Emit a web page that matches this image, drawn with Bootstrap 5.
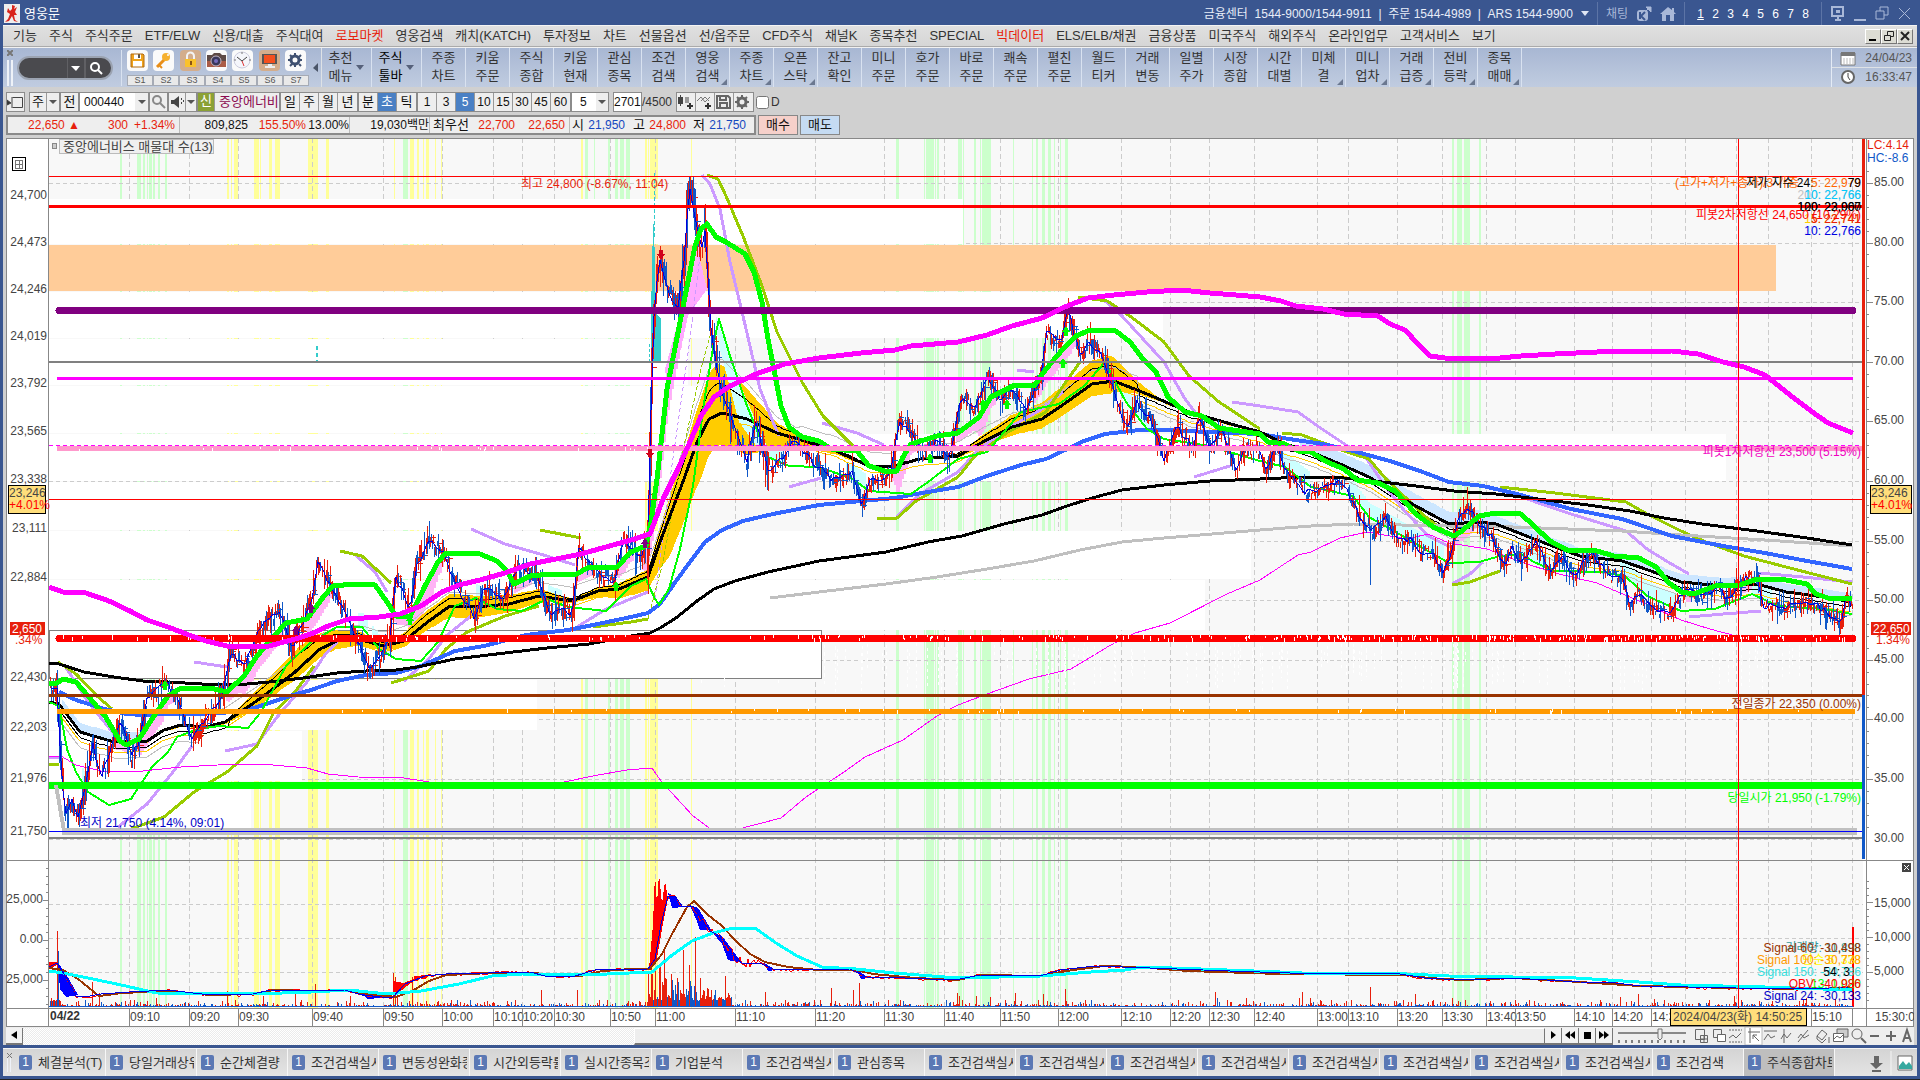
<!DOCTYPE html>
<html lang="ko">
<head>
<meta charset="utf-8">
<meta name="viewport" content="width=device-width, initial-scale=1">
<title>영웅문</title>
<link href="https://cdn.jsdelivr.net/npm/bootstrap@5.3.0/dist/css/bootstrap.min.css" rel="stylesheet">
<style>
body{font-family:"Liberation Sans","Noto Sans CJK KR",sans-serif;font-size:13px;line-height:16px;color:#333;background:#222}
a{color:inherit;text-decoration:none}
button,select,input{font:inherit;color:inherit;padding:0;margin:0;border:0;border-radius:0;background:none}
svg{display:block;flex:none}
.shell{background:#3a5690;padding:0 3px 3px}
.titlebar{height:25px;color:#fff;padding:2px 4px 0 1px}
.titlebar .logo{width:16px;height:19px}
.phones{font-size:12px;color:#e8edf8}
.tsep{width:1px;height:23px;background:#5c74a6}
.desk{font-size:12px;width:15px;text-align:center}
.faint{color:#a9b8d8}
.menubar{height:22px;background:linear-gradient(#e0e0e0,#d6d6d6);border-top:1px solid #f4f4f4;border-bottom:1px solid #aaa}
.menulist{width:78%;padding-left:10px}
.wbtn{width:16px;height:15px;background:#dcdcd4;border:1px solid #fff;border-right-color:#777;border-bottom-color:#777}
.toolbar{height:41px;background:linear-gradient(#a8b7d3,#c0cce0);border-top:1px solid #f1f1f1;border-bottom:1px solid #d0d0d0}
.grip{width:6px;height:26px;border:solid #eef2f8;border-width:0 2px}
.pill{width:96px;height:24px;border-radius:12px;background:#4a4a4e;border:2px solid #9ba3b1}
.pill input{width:44px;color:#fff}
.icons{padding-left:5px;border-left:1px solid #d9e2f0;width:189px}
.tile{width:21px;height:21px;border-radius:4px;background:#fafafa}
.tile.tan{background:#d3ad8c}
.slot{width:26px;height:11px;font-size:9px;line-height:9px;text-align:center;background:#e9e9e9;border:1px solid #a6abb5;color:#555}
.tool{width:44px;height:39px;line-height:18px;padding-top:1px;text-align:center;border-right:1px solid #d9e2f0;position:relative}
.tool.wide{width:50px;padding-right:12px}
.tool .corner{position:absolute;right:2px;bottom:2px}
.tool .drop{position:absolute;right:7px;top:17px}
.clock{width:86px;border-left:1px solid #e4ebf5;font-size:12px;color:#555}
.clock div{height:19px;padding:0 5px 0 8px}
.work{background:#d0d0d0;padding:4px 3px 0}
.rowgap{margin-bottom:3px}
.ctl{height:20px;border:1px solid #8c8c8c;background:#eee;display:flex;align-items:center;justify-content:center;color:#111}
.ctl button,.cell{height:18px;width:19px;border-right:1px solid #999;text-align:center;color:#111;line-height:16px}
.ctl>button:last-child{border-right:0}
.ctl.slim>button,.ctl.slim>.cell{width:17px}
.ctl .on{background:#4a80c4;color:#fff}
.num{font-size:12px}
.quote{height:20px;border:2px solid #8a8a8a;background:#eee;width:750px;font-size:12px;color:#111}
.quote span{text-align:right;white-space:nowrap}
.quote .kr{font-size:13px}
.up{color:#e71f0c}.down{color:#1448c0}
.div-r{border-right:1px solid #bbb}
.order{width:40px;height:20px;border:1px solid #888;color:#111;line-height:16px}
.chart{width:100%;height:auto;shape-rendering:crispEdges}
.chart text{font-size:12px}
.scroll{height:18px;background:#eee}
.track{background:repeating-conic-gradient(#fff 0 25%,#ebebeb 0 50%) 0 0/2px 2px;width:32%;height:17px}
.thumb{height:17px;background:#eee;border:1px solid #fff;border-right-color:#777;border-bottom:2px solid #777}
.sbtn{width:17px;height:17px;background:#f2f2f2;border-right:1px solid #777;border-bottom:2px solid #777;display:flex;align-items:center;justify-content:center}
.sbtn svg{fill:#000}
.zoomer{width:70px;height:16px}
.tabs{background:linear-gradient(#d4d4d4,#e4e4e4);height:28px;border-top:1px solid #f4f4f4;margin-top:3px}
.tabitem{width:91px;height:27px;padding:0 2px 0 4px;border-right:1px solid #f6f6f6;overflow:hidden;white-space:nowrap;color:#333}
.tabitem.on{background:#bebebe}
.tabitem b{width:13px;height:15px;background:#5b78b4;border-radius:2px;color:#fff;font-weight:400;font-size:12px;line-height:15px;text-align:center;flex:none}
.tabitem span{overflow:hidden;margin-left:6px}
</style>
<script src="https://cdn.jsdelivr.net/npm/bootstrap@5.3.0/dist/js/bootstrap.bundle.min.js"></script>
</head>
<body>
<div class="shell">
<header class="titlebar d-flex align-items-center">
  <svg class="logo" viewBox="0 0 16 19"><rect width="16" height="19" fill="#eee"/><path d="M8 1l3 1-1 3 3-2-2 5 2 3-3 0 1 5 3 2-4-1-2-5-3 5-4 1 3-3 2-5-3-2 1-4 2 3 2-2z" fill="#d8231b"/></svg>
  <span class="ms-1 me-auto">영웅문</span>
  <span class="phones">금융센터 &nbsp;1544-9000/1544-9911 &nbsp;|&nbsp; 주문 1544-4989 &nbsp;|&nbsp; ARS 1544-9900</span>
  <svg class="mx-2" width="8" height="5"><path d="M0 0h8L4 5z" fill="#dfe6f4"/></svg>
  <i class="tsep me-2"></i><a href="#" class="faint num me-2">채팅</a>
  <svg width="16" height="16" class="me-2"><rect x="1" y="4" width="11" height="11" rx="3" fill="#a9b8d8"/><path d="M4 6v7M9 6l-4 4 4 4" stroke="#3a5690" fill="none" stroke-width="2"/><path d="M10 5l4-4M10 1h5v5z" stroke="#a9b8d8" fill="#a9b8d8"/></svg>
  <svg width="16" height="16" class="me-2"><path d="M8 1L0 8h2v7h4V9h4v6h4V8h2l-2-2V2h-2v2z" fill="#a9b8d8"/></svg>
  <i class="tsep"></i>
  <nav class="d-flex ms-2 me-1" id="desks"></nav><i class="tsep ms-1"></i>
  <svg width="83" height="18" class="ms-2" fill="none" stroke="#a9b8d8" stroke-width="2"><path d="M2 2h11v9H2zM8 11v4M5 15h6"/><path d="M6 5h4v3H6z" fill="#a9b8d8" stroke="none"/><path d="M24 15h12"/><path d="M46 6h8v8h-8zM50 6V2h8v8h-4" stroke-width="1"/><path d="M69 3l11 11M80 3L69 14" stroke-width="1"/></svg>
</header>
<div class="menubar d-flex align-items-center justify-content-between">
  <nav class="menulist d-flex justify-content-between" id="menu"></nav>
  <div class="d-flex me-1">
    <button class="wbtn" aria-label="최소화"><svg width="14" height="12"><path d="M3 9h7v2H3z"/></svg></button>
    <button class="wbtn" aria-label="복원"><svg width="14" height="12" fill="none" stroke="#222"><path d="M2.500 5.500h6v5h-6zM5.500 5V1.500h6v5H9"/></svg></button>
    <button class="wbtn" aria-label="닫기"><svg width="14" height="12" stroke="#222" stroke-width="2"><path d="M3 2l8 8M11 2l-8 8"/></svg></button>
  </div>
</div>
<div class="toolbar d-flex align-items-center">
  <div class="ms-1 d-flex flex-column align-items-center"><svg width="6" height="6" stroke="#777" stroke-width="2"><path d="M0 0l6 6M6 0L0 6"/></svg><i class="grip mt-1"></i></div>
  <div class="pill d-flex align-items-center mx-1"><input aria-label="화면 검색" class="ms-1"><svg width="42" height="20" fill="none" stroke="#fff"><path d="M0 0v20M18 0v20" stroke="#77777b"/><path d="M4 8h9l-4 5z" fill="#fff" stroke="none"/><circle cx="28" cy="9" r="4" stroke-width="2"/><path d="M31 12l4 4" stroke-width="2"/></svg></div>
  <div class="icons ms-1">
    <div class="d-flex justify-content-between ps-0 pe-1 mb-1">
      <svg class="tile" viewBox="0 0 21 21"><path d="M4 4h12l1 1v12H4z" fill="#f0a31c"/><path d="M7 4h7v5H7zM6 11h9v6H6z" fill="#fff"/><path d="M11 4h2v4h-2z" fill="#555"/><path d="M4 4h12l1 1v12H4z" fill="none" stroke="#b06a10"/></svg>
      <svg class="tile" viewBox="0 0 21 21"><path d="M4 17L12 9" stroke="#e88e18" stroke-width="3"/><circle cx="13" cy="7" r="4" fill="#f6b02d"/><circle cx="15" cy="5" r="1" fill="#fff"/><path d="M6 15l3 3" stroke="#e88e18" stroke-width="2"/></svg>
      <svg class="tile tan" viewBox="0 0 21 21"><path d="M7 9V6a3 3 0 017 0v3" fill="none" stroke="#f3f3f3" stroke-width="2"/><path d="M5 9h11v8H5z" fill="#fac12b"/><path d="M10 11h2v4h-2z" fill="#8a5513"/></svg>
      <svg class="tile" viewBox="0 0 21 21"><path d="M1 5h5l2-2h6l2 2h4v12H1z" fill="#5d4a46"/><path d="M1 11h19v6H1z" fill="#aa5c47"/><circle cx="10" cy="11" r="5" fill="#39375a" stroke="#c4b9c6"/><circle cx="10" cy="11" r="2" fill="#746dbe"/></svg>
      <svg class="tile" viewBox="0 0 21 21"><circle cx="10" cy="10" r="8" fill="#f5f6fb" stroke="#ccd"/><path d="M10 11L5 7M10 11l5-4" stroke="#444"/><path d="M10 11l2 5" stroke="#d33"/><path d="M10 2v2M2 10h2M17 10h2" stroke="#777"/></svg>
      <svg class="tile tan" viewBox="0 0 21 21"><path d="M3 4h15v10H3z" fill="#555"/><path d="M5 5h11v8H5z" fill="#f4501e"/><path d="M9 14h4v2h3v2H6v-2h3z" fill="#eee"/></svg>
      <svg class="tile" viewBox="0 0 21 21"><circle cx="10" cy="10" r="4" fill="none" stroke="#3f5070" stroke-width="3"/><path d="M10 3v2M10 15v2M3 10h2M15 10h2M5 5l2 2M14 14l2 2M16 5l-2 2M5 16l2-2" stroke="#3f5070" stroke-width="2"/></svg>
    </div>
    <div class="d-flex" id="slots"></div>
  </div>
  <svg width="11" height="12"><path d="M8 1v9L3 6z" fill="#4a5568"/></svg>
  <nav class="d-flex border-start" id="tools"></nav>
  <div class="clock ms-auto">
    <div class="d-flex align-items-center justify-content-between border-bottom"><svg width="16" height="16"><path d="M1 3h14v12H1z" fill="#fff" stroke="#777"/><path d="M1 2h14v4H1z" fill="#777"/><path d="M4 8v6M7 8v6M10 8v6M13 8v6" stroke="#bbb"/></svg>24/04/23</div>
    <div class="d-flex align-items-center justify-content-between"><svg width="16" height="16"><circle cx="8" cy="8" r="6" fill="#fff" stroke="#666" stroke-width="2"/><path d="M8 4v4l2 3" stroke="#444" fill="none"/></svg>16:33:47</div>
  </div>
</div>
<main class="work">
  <div class="d-flex align-items-center rowgap">
    <div class="ctl me-1 slim"><button aria-label="창 열기"><svg width="17" height="16" fill="none" stroke="#444"><path d="M5.500 3.500h10v10h-10M5 3v11" /><path d="M0 6v5l4-2z" fill="#333"/></svg></button></div>
    <div class="ctl slim"><select class="cell" style="appearance:none" aria-label="시장"><option>주</option></select><svg width="12" height="16"><path d="M2 6h8l-4 4z" fill="#555"/></svg></div>
    <div class="ctl slim"><button>전</button></div>
    <div class="ctl bg-white"><input class="num ps-1" value="000440" size="6" aria-label="종목코드" style="width:55px"><svg width="13" height="18"><rect width="13" height="18" fill="#eee"/><path d="M3 7h8l-4 4z" fill="#555"/></svg></div>
    <div class="ctl slim"><button aria-label="종목 검색"><svg width="17" height="16" fill="none" stroke="#888" stroke-width="2"><circle cx="7" cy="6" r="4"/><path d="M10 9l5 5"/></svg></button></div>
    <div class="ctl slim"><button aria-label="소리"><svg width="17" height="16" fill="#444"><path d="M2 6h3l5-4v12l-5-4H2zM12 4h1v2h-1zM12 8h1v2h-1zM14 6h1v2h-1z"/></svg></button><svg width="10" height="16"><path d="M1 6h8l-4 4z" fill="#555"/></svg></div>
    <div class="ctl slim"><b class="cell fw-normal text-white" style="background:#8ba135">신</b><span class="text-nowrap overflow-hidden ps-1" style="width:64px;color:#8b0a50">중앙에너비</span></div>
    <div class="ctl"><button>일</button><button>주</button><button>월</button><button>년</button></div>
    <div class="ctl"><button>분</button><button class="on">초</button><button>틱</button></div>
    <div class="ctl num"><button>1</button><button>3</button><button class="on">5</button><button>10</button><button>15</button><button>30</button><button>45</button><button>60</button></div>
    <div class="ctl bg-white num me-1"><select style="appearance:none;width:24px" class="ps-2" aria-label="주기"><option>5</option></select><svg width="12" height="18"><rect width="12" height="18" fill="#eee"/><path d="M2 7h8l-4 4z" fill="#555"/></svg></div>
    <div class="ctl bg-white num"><input value="2701" aria-label="봉 개수" style="width:27px"></div><span class="num pe-1">/4500</span>
    <div class="ctl">
      <button aria-label="지표 추가"><svg width="17" height="16"><path d="M1 3h5v7H1zM3 1h1v11H3z" fill="#444"/><path d="M8 3h4v6H8z" fill="#999"/><path d="M12 9h2v6h-2zM10 11h6v2h-6z" fill="#333"/></svg></button>
      <button aria-label="선 추가"><svg width="17" height="16"><path d="M1 7l4-4 4 5 5-5M5 7l4-4 4 4" stroke="#777" fill="none"/><path d="M11 9h2v6h-2zM9 11h6v2H9z" fill="#333"/></svg></button>
      <button aria-label="저장"><svg width="17" height="16" fill="none" stroke="#666" stroke-width="2"><path d="M2 2h11l2 2v10H2zM5 2v4h6V2M5 14V9h7v5"/></svg></button>
      <button aria-label="설정"><svg width="17" height="16" fill="none" stroke="#666"><circle cx="8" cy="8" r="4" stroke-width="3"/><path d="M8 1v14M1 8h14M3 3l10 10M13 3L3 13" stroke-width="2" stroke-dasharray="3 8"/></svg></button>
    </div>
    <input type="checkbox" id="dchk" style="width:13px;height:13px;margin:0 2px"><label for="dchk" class="num">D</label>
  </div>
  <div class="d-flex align-items-center rowgap">
    <div class="quote d-flex align-items-center">
      <span class="up" style="width:72px">22,650 ▲</span><span class="up" style="width:48px">300</span><span class="up div-r pe-1" style="width:52px">+1.34%</span>
      <span style="width:68px">809,825</span><span class="up" style="width:58px">155.50%</span><span class="div-r" style="width:44px">13.00%</span>
      <span class="div-r" style="width:80px">19,030백만</span><span class="kr" style="width:39px">최우선</span><span class="up" style="width:46px">22,700</span><span class="up div-r pe-1" style="width:55px">22,650</span>
      <span class="kr" style="width:14px">시</span><span class="down" style="width:41px">21,950</span><span class="kr" style="width:20px">고</span><span class="up" style="width:41px">24,800</span><span class="kr" style="width:19px">저</span><span class="down" style="width:41px">21,750</span>
    </div>
    <button class="order" style="background:#f6d0ca;margin-left:2px">매수</button><button class="order" style="background:#c5dbf2;margin-left:2px">매도</button>
  </div>
  <svg class="chart" viewBox="6 139 1908 889" id="chart" role="img" aria-label="중앙에너비스 초봉 차트"></svg>
  <div class="scroll d-flex align-items-center">
    <button class="sbtn" aria-label="왼쪽으로"><svg width="6" height="8"><path d="M6 0v8L0 4z"/></svg></button>
    <div class="track"></div><div class="thumb flex-grow-1"></div>
    <button class="sbtn" aria-label="재생"><svg width="5" height="8"><path d="M0 0v8l5-4z"/></svg></button>
    <button class="sbtn" aria-label="뒤로"><svg width="10" height="8"><path d="M5 0v8L0 4zM10 0v8L5 4z"/></svg></button>
    <button class="sbtn" aria-label="정지"><svg width="7" height="7"><path d="M0 0h7v7H0z"/></svg></button>
    <button class="sbtn" aria-label="앞으로"><svg width="10" height="8"><path d="M0 0v8l5-4zM5 0v8l5-4z"/></svg></button>
    <svg class="zoomer mx-1" viewBox="0 0 70 16"><path d="M1 5h68" stroke="#888" stroke-width="2"/><path d="M2 12v3M9 12v3M15 12v3M22 12v3M28 12v3M35 12v3M41 12v3M48 12v3M54 12v3M61 12v3M67 12v3" stroke="#111"/><path d="M41 1h4v9l-2 2-2-2z" fill="#eee" stroke="#777"/></svg>
    <svg width="223" height="18" fill="none" stroke="#666"><path d="M4.500 2.500h9v10h-9zM9.500 8.500h7v7h-7zM9 12h8M13 8v8"/><path d="M22.500 2.500h8v8h-8z"/><path d="M26.500 7.500h8v7h-8z" fill="#fff"/><path d="M38 3h13M38 15h13" stroke-dasharray="2 1"/><path d="M38 11l4-3 3 3 5-5"/><path d="M54 0h17v18H54z" fill="#fff" stroke="#bbb"/><path d="M57 5h12M59 1v15" /><path d="M62 8l6 6M62 8v4M62 8h4"/><path d="M73 4h13M73 13l4-6 3 4 4-2M93 2v14M90 12l3-5 3 4 4-5M107 15l10-12M107 11l3-4 3 4 5-3M126 9l5-6 5 4-5 6zM126 9v3l5 4 4-4M138 10v6"/><path d="M146 2h11v8h-11z" fill="#ccc"/><path d="M142.500 6.500h10v8h-10z" fill="#fff"/><path d="M143 12l3-3 3 2 4-4"/><circle cx="166" cy="7" r="5"/><path d="M170 11l5 5" stroke-width="2"/><path d="M179 9h9M195 9h10M200 4v10" stroke-width="2"/><path d="M212 15l4-12 4 12M213 11h6" stroke-width="2"/></svg>
  </div>
</main>
<footer class="tabs d-flex align-items-center">
  <div class="d-flex flex-column align-items-center" style="width:12px"><svg width="5" height="5" stroke="#777"><path d="M0 0l5 5M5 0L0 5"/></svg><i class="grip" style="height:14px;width:4px;border-width:0 1px"></i></div>
  <nav class="d-flex" id="tabs"></nav>
  <svg width="70" height="24" class="ms-auto"><path d="M27 5h5v7h4l-7 6-6-6h4zM25 19h9v2h-9z" fill="#666"/><path d="M44 0v24" stroke="#f4f4f4"/><path d="M51 5h14v14H51z" fill="#fff" stroke="#666"/><path d="M52 15l4-5 3 4 3-3 3 4v3H52z" fill="#36a9a0"/></svg>
</footer>
</div>
<script>
const byId = id => document.getElementById(id);
byId('desks').innerHTML = [1,2,3,4,5,6,7,8].map(n => `<a href="#" class="desk${n==1?' text-decoration-underline':''}">${n}</a>`).join('');
byId('menu').innerHTML = '기능,주식,주식주문,ETF/ELW,신용/대출,주식대여,로보마켓,영웅검색,캐치(KATCH),투자정보,차트,선물옵션,선/옵주문,CFD주식,채널K,종목추천,SPECIAL,빅데이터,ELS/ELB/채권,금융상품,미국주식,해외주식,온라인업무,고객서비스,보기'
  .split(',').map(t => `<a href="#" class="text-nowrap${/로보|빅데/.test(t)?' up':''}">${t}</a>`).join('');
byId('slots').innerHTML = [1,2,3,4,5,6,7].map(n => `<button class="slot">S${n}</button>`).join('');
const corner = '<svg class="corner" width="6" height="6"><path d="M6 0v6H0z" fill="#6b7890"/></svg>';
byId('tools').innerHTML = ['추천 메뉴','주식 툴바'].map((t,i) => `<a href="#" class="tool wide${i?' text-black':''}">${t.replace(' ','<br>')}<svg class="drop" width="8" height="5"><path d="M0 0h8L4 5z" fill="#56617a"/></svg></a>`).join('') +
  '주종 차트,키움 주문,주식 종합,키움 현재,관심 종목,조건 검색,영웅 검색*,주종 차트*,오픈 스탁*,잔고 확인,미니 주문,호가 주문,바로 주문,쾌속 주문,펼친 주문,월드 티커,거래 변동,일별 주가,시장 종합,시간 대별,미체 결*,미니 업차*,거래 급증*,전비 등락*,종목 매매*'
  .split(',').map(t => `<a href="#" class="tool">${t.replace('*','').replace(' ','<br>')}${t.includes('*')?corner:''}</a>`).join('');
byId('tabs').innerHTML = '체결분석(T),당일거래상위,순간체결량,조건검색실시,변동성완화종목,시간외등락률,실시간종목조회,기업분석,조건검색실시,관심종목,조건검색실시,조건검색실시,조건검색실시,조건검색실시,조건검색실시,조건검색실시,조건검색실시,조건검색실시,조건검색,주식종합차트'
  .split(',').map((t,i) => `<a href="#" class="tabitem d-flex align-items-center${i==19?' on':''}"><b>1</b><span>${t}</span></a>`).join('');

// ---- chart ----
let seed = 7;
const rnd = () => (seed = (seed*16807) % 2147483647) / 2147483647;
const out = [];
const rect = (x,y,w,h,f,extra='') => out.push(`<rect x="${x}" y="${y}" width="${w}" height="${h}" fill="${f}" ${extra}/>`);
const hline = (x1,x2,y,w,c,extra='') => out.push(`<path d="M${x1} ${y}H${x2}" stroke="${c}" stroke-width="${w}" ${extra}/>`);
const vline = (x,y1,y2,w,c,extra='') => out.push(`<path d="M${x} ${y1}V${y2}" stroke="${c}" stroke-width="${w}" ${extra}/>`);
const curve = (p,w,c,extra='') => out.push(`<polyline points="${p}" fill="none" stroke="${c}" stroke-width="${w}" stroke-linejoin="round" ${extra}/>`);
const poly = (p,c) => out.push(`<polygon points="${p}" fill="${c}"/>`);
const text = (x,y,t,c='#444',extra='') => out.push(`<text x="${x}" y="${y+4}" fill="${c}" ${extra}>${t}</text>`);
const end = 'text-anchor="end"';
const parse = s => s.split(' ').map(p => p.split(',').map(Number));
const at = (pts,x,k=1) => { let i=1; while(i<pts.length-1 && pts[i][0]<x) i++; const a=pts[i-1],b=pts[i]; const t=Math.max(0,Math.min(1,(x-a[0])/(b[0]-a[0]))); return a[k]+(b[k]-a[k])*t; };

rect(6,139,1908,889,'#fff');
rect(49,139,1814,870,'#f8f8f8');
const stripes = (list,c) => list.forEach(([x,w]) => rect(x,139,w,870,c));
stripes([[120,2],[137,4],[143,2],[147,1],[149,3],[153,2],[158,2],[165,2],[403,5],[585,3],[594,1],[608,2],[615,3],[620,4],[626,4],[896,3],[924,1],[926,8],[935,1],[937,2],[958,4],[963,1],[974,2],[980,1],[982,9],[1013,1],[1032,1],[1036,2],[1042,3],[1048,3],[1054,1],[1060,1],[1065,3],[1452,2],[1457,5],[1464,6],[1479,2]],'#ccffcc');
stripes([[227,2],[231,1],[234,4],[254,5],[260,1],[269,3],[275,5],[308,10],[326,3],[394,1],[410,4],[417,2],[423,1],[426,3],[435,1],[441,1],[581,2],[645,2],[648,1],[650,8],[691,1]],'#ffff99');
const times = [[129,'09:10'],[189,'09:20'],[238,'09:30'],[312,'09:40'],[383,'09:50'],[442,'10:00'],[493,'10:10'],[522,'10:20'],[554,'10:30'],[610,'10:50'],[655,'11:00'],[735,'11:10'],[815,'11:20'],[884,'11:30'],[944,'11:40'],[1000,'11:50'],[1058,'12:00'],[1121,'12:10'],[1170,'12:20'],[1209,'12:30'],[1254,'12:40'],[1317,'13:00'],[1348,'13:10'],[1397,'13:20'],[1442,'13:30'],[1486,'13:40'],[1515,'13:50'],[1574,'14:10'],[1612,'14:20'],[1651,'14:3'],[1685,''],[1736,''],[1768,''],[1811,'15:10'],[1852,'']];
times.forEach(([x]) => vline(x+.5,139,1009,1,'#ccc','stroke-dasharray="5 3"'));
for (let i=0;i<12;i++) hline(49,1863,Math.round(184+i*59.6)+.5,1,'#ccc','stroke-dasharray="4 3"');
[905,939,973].forEach(y => hline(49,1863,y+.5,1,'#ccc','stroke-dasharray="4 3"'));
// volume by price
[[200,45,963],[293,46,1163],[340,46,688],[387,47,840],[435,47,1726],[483,48,645],[532,48,1251],[581,50,1205],[681,50,537],[732,50,302],[783,50,251]].forEach(([y,h,x]) => rect(49,y,x-49,h,'#fff'));
rect(49,246,1727,46,'#ffcc99');
rect(49,631,772,48,'#fff','stroke="#808080"');

const slow = '49,664 59,665 84,673 114,678 143,682 168,683 202,685 236,686 269,683 303,679 337,674 366,672 396,671 417,668 455,660 505,654 547,649 589,645 631,637 650,634 660,629 676,619 697,602 714,590 735,582 768,573 819,562 886,553 928,543 962,537 1004,525 1042,516 1067,507 1092,499 1122,491 1164,486 1210,482 1260,480 1302,478 1344,479 1382,483 1416,487 1454,492 1496,495 1546,501 1588,506 1630,512 1664,519 1702,525 1757,532 1807,539 1852,546';
const mid = '49,703 59,705 80,733 114,743 147,742 164,731 181,726 206,728 225,723 248,708 269,693 295,673 320,650 337,642 358,640 383,647 404,642 429,622 450,607 476,608 509,605 539,597 572,602 598,592 619,590 648,578 660,543 684,480 697,443 709,420 722,414 747,420 777,434 798,440 836,452 869,467 890,468 920,460 958,457 979,445 1012,428 1042,420 1067,403 1092,385 1114,382 1147,395 1189,413 1231,425 1260,433 1285,445 1311,453 1340,465 1369,478 1403,500 1449,525 1479,523 1496,525 1529,538 1555,548 1580,557 1622,562 1651,572 1681,583 1723,587 1757,585 1786,593 1824,598 1852,603';
const blue = '59,693 76,701 101,709 126,715 143,716 168,715 198,715 236,713 257,708 290,697 311,691 337,682 366,676 396,674 421,667 455,652 484,647 526,636 568,631 593,626 631,618 648,614 660,605 676,582 693,559 705,543 722,531 743,522 773,515 819,506 861,502 895,499 916,495 958,488 987,477 1021,466 1046,460 1063,452 1084,442 1105,435 1139,431 1172,431 1206,433 1260,435 1289,440 1323,445 1353,452 1390,462 1420,472 1449,483 1483,487 1517,495 1571,510 1622,520 1672,537 1723,547 1765,554 1807,562 1852,570';
const silver = '770,599 819,593 886,585 937,578 987,570 1034,562 1080,551 1122,543 1164,539 1260,531 1311,527 1353,525 1449,527 1513,528 1622,532 1681,536 1765,541 1852,547';
const green = '49,685 57,684 63,680 76,683 88,697 105,717 120,742 126,746 139,740 152,720 168,697 181,689 210,689 227,693 244,677 257,657 274,637 286,624 307,620 324,597 333,587 354,585 375,586 387,603 396,617 410,618 425,587 438,563 446,554 480,555 497,562 507,572 514,585 530,577 551,575 575,576 589,568 617,568 631,553 646,547 651,523 657,480 667,390 682,313 695,247 701,230 707,225 716,238 726,243 745,255 754,273 762,303 768,340 781,407 789,428 802,438 819,442 831,450 857,452 869,467 888,473 897,472 903,458 911,445 937,437 958,434 979,418 991,398 1015,386 1034,387 1046,370 1063,350 1076,337 1090,331 1116,332 1130,343 1143,360 1156,373 1168,398 1185,413 1202,417 1219,429 1260,435 1268,443 1285,445 1298,452 1311,453 1327,463 1344,470 1357,481 1378,484 1395,492 1416,515 1433,528 1454,537 1462,532 1479,517 1496,514 1521,515 1534,527 1550,542 1567,551 1597,552 1614,557 1639,559 1656,568 1668,583 1681,593 1694,595 1715,587 1740,586 1757,580 1786,581 1807,585 1816,595 1828,599 1852,599';
const thinGreen = '49,703 59,707 67,750 76,773 88,793 109,806 131,800 152,768 168,753 177,738 198,730 219,727 248,729 261,713 286,667 311,643 337,628 362,628 379,650 396,660 421,662 438,643 455,607 476,599 497,610 522,612 547,600 568,608 606,612 631,587 646,580 654,598 659,606 669,590 680,550 693,487 705,397 714,343 719,320 730,357 747,407 768,458 789,467 819,468 853,480 869,492 911,495 928,483 958,460 987,453 1021,413 1059,405 1084,387 1105,363 1126,403 1147,430 1164,440 1210,447 1236,455 1260,462 1285,468 1311,488 1353,497 1369,518 1399,535 1428,552 1449,564 1479,563 1500,557 1521,555 1534,563 1555,572 1605,573 1626,578 1647,597 1681,612 1715,610 1752,595 1778,607 1824,610 1852,615';
const magenta = '49,588 63,593 86,594 109,602 130,612 147,621 168,628 189,636 206,642 227,647 253,648 269,647 295,640 311,635 328,627 349,620 379,618 400,615 421,607 442,593 459,586 480,581 505,574 530,565 556,560 581,555 606,548 631,541 650,535 663,500 678,470 690,443 701,417 714,398 730,387 756,375 785,365 819,359 861,354 895,351 911,347 958,343 987,336 1012,327 1042,319 1067,307 1088,299 1114,296 1147,293 1181,291 1210,294 1236,296 1260,298 1281,302 1296,307 1323,310 1344,315 1378,317 1390,325 1405,331 1418,345 1430,357 1445,359 1500,359 1521,357 1555,355 1597,353 1672,352 1698,355 1723,363 1744,368 1765,376 1790,396 1811,412 1828,424 1853,434';
const thinMagenta = '49,757 61,757 76,766 101,772 143,772 181,768 236,765 261,765 307,769 328,775 358,778 404,779 429,783 500,787 564,783 598,776 627,771 652,769 661,782 693,817 712,831 735,831 781,819 806,798 844,773 865,758 903,741 937,717 958,706 987,695 1029,680 1071,670 1109,647 1135,634 1170,624 1227,595 1260,581 1298,556 1311,553 1340,539 1367,533 1407,540 1428,535 1449,544 1487,550 1521,563 1555,574 1597,584 1639,602 1681,621 1710,630 1736,637 1769,642 1824,640 1852,642';
const price = parse('49,690 57,690 61,767 65,815 72,800 79,822 84,790 93,747 101,780 116,733 122,722 131,757 139,743 147,700 166,683 180,705 191,740 206,720 223,697 230,653 244,667 261,627 280,613 292,650 311,603 318,562 328,583 349,620 370,672 390,640 396,577 410,610 417,565 429,543 442,550 455,583 475,620 484,590 505,600 518,567 539,580 551,620 560,607 572,617 579,550 598,573 614,583 623,540 640,560 648,537 653,330 659,257 667,290 678,310 684,263 689,187 701,250 705,233 711,330 720,385 735,430 747,460 756,423 768,473 781,460 794,440 810,460 831,480 853,473 862,510 869,483 890,477 899,423 907,427 922,453 937,443 949,460 962,397 975,410 988,377 1000,403 1010,387 1025,410 1042,377 1046,333 1061,343 1068,310 1080,357 1090,343 1105,363 1114,393 1126,430 1137,403 1151,420 1164,460 1177,427 1194,450 1198,413 1210,450 1221,430 1236,470 1244,450 1260,453 1266,473 1276,443 1285,470 1306,493 1340,483 1350,497 1361,520 1372,533 1386,517 1399,543 1411,540 1420,552 1433,555 1443,575 1452,550 1458,520 1468,507 1477,523 1491,537 1504,567 1512,550 1521,563 1536,543 1550,573 1561,557 1574,577 1592,553 1609,577 1622,578 1630,607 1639,593 1651,610 1672,613 1685,590 1702,597 1719,587 1727,600 1744,580 1757,580 1763,607 1790,607 1811,603 1826,613 1841,623 1847,597 1852,607');
const midP = parse(mid), greenP = parse(green), slowG = parse(thinGreen);
const shifted = (f,x1=60,x2=1852) => { const a=[]; for(let x=x1;x<=x2;x+=3) a.push(x+','+Math.round(at(midP,x)+f(x))); return a; };

// cloud layers
const band = (x1,x2,f,g,c) => poly(shifted(f,x1,x2).concat(shifted(g,x1,x2).reverse()).join(' '),c);
band(62,150,()=>-9,()=>-1,'#cce6ff');
band(1300,1480,()=>-12,()=>0,'#cce6ff'); band(1480,1852,()=>-8,()=>0,'#cce6ff');
for (let x=60;x<1850;x+=2){ const g=at(greenP,x), p=at(price,x), t=at(slowG,x);
  if (p<g-2 || at(greenP,x+6)<g-3) rect(x,Math.round(g),2,Math.min(26,Math.max(9,Math.abs(at(greenP,x+6)-g)*2))|0,'#ffb3f5');
  else if (t>p-30 && t<p+22 && at(slowG,x+8)>t+3) rect(x,Math.round(t)-14,2,16,'#ccffff'); }
const yw = [[60,0,1],[225,0,2],[250,10,6],[300,22,8],[340,10,8],[385,4,5],[420,12,7],[460,12,12],[540,7,6],[572,2,2],[650,8,14],[670,20,40],[700,35,45],[716,52,30],[747,30,36],[777,10,14],[810,2,6],[870,0,1],[950,1,1],[1010,12,8],[1095,24,12],[1110,26,12],[1135,10,4],[1160,0,2],[1852,0,1]];
band(60,1300,x=>-at(yw,x,1),x=>at(yw,x,2),'#ffcc00');
poly('665,370 676,330 699,257 707,290 688,317 669,403','#ffaaff');
poly('716,317 739,383 768,450 768,463 739,423 718,343','#ccffff');
poly('651,363 651,315 653,225 654,225 656,315 661,320 661,363','#33cccc');
vline(654.5,174,240,1,'#33cccc','stroke-dasharray="4 2"'); vline(649.5,345,363,1,'#33cccc','stroke-dasharray="3 2"'); vline(316.5,347,363,2,'#33cccc','stroke-dasharray="4 3"');

curve(shifted(x=>x<200?16:x<670?-14:x<800?-at(yw,x,1)-6:x<1140?-14:14).join(' '),1,'#c0c0c0');
curve(shifted(x=>x<200?10:x<1140?6:10,60,1852).join(' '),1,'#ffcc00');
curve(shifted(x=>x<230?6:x<1140?-at(yw,x,1)*.6-1:5).join(' '),1,'#000');
['65,667 88,703 114,735','49,759 59,758','118,828 147,805 173,773 192,747','194,663 227,668','225,752 257,745 278,717 307,683 324,657 337,643','354,555 375,573 387,593','404,682 429,660 446,637 471,617','471,530 505,545 547,557 575,566','577,628 606,610 648,593','702,176 710,185 720,210 730,263 743,317 760,390 773,423 779,437','789,488 821,479','822,424 857,434 884,446','897,518 920,495 958,473 979,450 1012,427 1042,410 1063,393','1017,371 1034,373','1105,302 1122,317 1143,340 1164,363 1185,400 1198,417','1194,478 1233,466','1232,403 1260,407 1298,413 1319,428 1346,446 1365,457 1382,483 1403,510 1428,537 1452,549','1452,585 1470,575 1483,563','1521,498 1571,515 1626,532 1647,550 1668,563 1689,575','1689,618 1723,615 1761,612','1759,574 1803,578 1852,583'].forEach(p => curve(p,3,'#cc99ff'));
['58,663 76,675 97,697 112,710','49,765 59,765','131,830 164,818 194,793 227,773 257,747 274,713 295,693 314,667','340,552 362,557 391,584','391,684 429,672 446,650 467,633 505,617 539,607','540,531 581,539','593,628 631,623 648,620','707,176 718,180 726,197 743,237 762,287 777,333 802,383 823,417 853,447','877,520 897,519 916,502 958,478 975,457 1008,433 1046,413 1063,387 1080,363','1078,298 1107,302 1130,317 1164,343 1189,377 1219,403 1260,430','1282,434 1302,436 1329,446 1344,452 1369,460 1386,480 1407,500 1428,520 1449,535','1452,586 1470,583 1500,572','1500,488 1555,494 1626,503 1647,515 1681,532 1706,543 1744,557 1786,568 1852,585'].forEach(p => curve(p,3,'#99cc00'));
curve('648,620 663,563 684,447 701,370 710,337',1,'#99cc00','stroke-dasharray="4 2"');
curve('655,600 670,480 690,340 702,240',1,'#cc99ff','stroke-dasharray="4 3"');
curve(silver,3,'#c0c0c0'); curve(blue,4,'#3366ff'); curve(slow,3,'#000'); curve(mid,3,'#000');
curve(thinGreen,2,'#00ff00'); curve(thinMagenta,1,'#ff00ff');

let rp='',bp='',lp=[];
for (let x=50;x<1853;x++){
  const y=at(price,x), slope=Math.abs(at(price,x+2)-y), amp=x>645&&x<770?14:x<645?10:8;
  const c=y+(rnd()-.5)*amp*1.5, l=2+rnd()*rnd()*amp*3+slope*1.2;
  const s=`M${x+.5} ${Math.round(c-l/2)}v${Math.round(l)+1}`;
  const falling=at(price,x+4)>at(price,x-4);
  if (rnd()<(falling?.36:.62)) rp+=s; else if (rnd()<.8) bp+=s;
  if (rnd()<.12) rp+=`M${x} ${Math.round(c)+.5}h5`; else if (rnd()<.1) bp+=`M${x} ${Math.round(c)+.5}h5`;
  if (x%3==0) lp.push(x+','+Math.round(y+(rnd()-.5)*6));
  if (rnd()<.04) (rnd()<.5 ? (rp+=`M${x+.5} ${Math.round(y-20)}v22`) : (bp+=`M${x+.5} ${Math.round(y-4)}v22`));
}
out.push(`<path d="${rp}" stroke="#e71f0c"/><path d="${bp}M1370.500 530v56M689.500 178v34" stroke="#1058c8"/>`);
curve(lp.join(' '),1,'#0000e0');
curve(green,5,'#00ff00');
// levels
hline(49,1863,177.5,1,'#f00'); hline(49,1863,207.5,3,'#f00');
hline(59,1853,311.5,7,'#800080','stroke-linecap="round"');
hline(49,1863,363,2,'#808080'); hline(57,1853,379.5,3,'#f0f');
hline(49,1863,446.5,1,'#f0f','stroke-dasharray="4 3"'); hline(57,1863,449.5,5,'#ff99cc');
hline(49,1863,500.5,1,'#f00'); hline(59,1853,639.5,7,'#f00','stroke-linecap="round"');
hline(49,1863,696.5,3,'#993300'); hline(57,1855,712.5,5,'#ff9900');
const fleck = (n,x1,x2,y,h) => { for(let i=0;i<n;i++) rect(Math.round(x1+rnd()*(x2-x1)),y+Math.floor(rnd()*h/2),1,2+Math.floor(rnd()*h/2),'#fff'); };
fleck(45,60,640,636,7); fleck(150,730,1850,636,7); fleck(80,1260,1850,636,7); fleck(50,300,1800,710,5); fleck(20,60,660,448,5);
for(let i=0;i<150;i++){ const x=Math.round(700+rnd()*1150); vline(x+.5,644+Math.round(rnd()*10),660+Math.round(rnd()*34),1,'#fff','stroke-dasharray="3 4"'); }
hline(49,1863,786.5,7,'#00ff00'); poly('54,786 58,786 66,832 62,832','#c0c0c0'); hline(62,1857,832.5,7,'#c0c0c0'); hline(49,1863,832.5,1,'#00f'); hline(49,1863,839,2,'#808080');
curve(magenta,5,'#ff00ff');
const arrow = (x,y,c,up) => out.push(`<path d="M${x-4} ${y}h8l-4 ${up?-6:6}zM${x-2} ${y}v${up?4:-4}h4v${up?-4:4}z" fill="${c}"/>`);
[[661,255],[650,454]].forEach(a => arrow(...a,'#d0021b',false));
[[296,632],[311,610],[645,545]].forEach(a => arrow(...a,'#800080',true));
[[165,687],[410,622],[616,588],[930,460],[983,406],[1007,406],[1063,365],[1066,333]].forEach(a => arrow(...a,'#00ff00',true));

// lower panel
let rv='',bv='';
for (let x=50;x<1853;x++){ let h=1+Math.floor(rnd()*rnd()*rnd()*13); if(x>647&&x<732) h=Math.round(8+rnd()*rnd()*(x<700?64:30)*(x<700?1:(745-x)/45)); if(x<60) h+=6;
  if (rnd()<.6) rv+=`M${x+.5} 1008v-${h}`; else bv+=`M${x+.5} 1008v-${Math.ceil(h*.7)}`; }
[[57,76],[92,25],[99,14],[227,16],[295,13],[315,23],[393,34],[395,30],[412,30],[541,17],[577,17],[664,58],[695,70],[725,31],[765,15],[831,19],[853,17],[859,24],[957,14],[990,10],[1015,14],[1043,13],[1065,18],[1215,15],[1302,15],[1370,20],[1415,13],[1638,13],[1654,8]].forEach(([x,h]) => rv+=`M${x+.5} 1008v-${h}`);
out.push(`<path d="${rv}" stroke="#e71f0c"/><path d="${bv}M58.500 1008v-56" stroke="#1058c8"/>`);
vline(1852.5,928,1008,2,'#f00');
hline(49,1853,1007.5,1,'#1058c8');
const obv='49,968 57,964 67,980 76,997 84,998 101,995 130,993 168,991 210,996 253,995 270,991 311,992 345,991 362,996 392,999 405,985 425,977 446,975 530,973 545,977 572,978 595,971 648,970 655,960 661,925 668,897 675,897 682,907 693,907 700,918 710,932 720,937 735,958 742,964 760,964 775,971 850,970 866,978 905,979 955,981 980,976 1040,977 1060,971 1095,967 1150,969 1230,972 1290,974 1400,975 1425,979 1462,981 1513,979 1580,983 1616,984 1640,987 1736,989 1807,990 1852,988';
const obvP = parse(obv);
poly('49,963 57,963 57,966 49,970','#f00'); poly('58,964 66,975 78,996 66,998 60,990','#00f');
poly('649,970 653,925 655,875 657,905 659,875 662,905 665,882 668,900 662,930 656,965','#f00');
poly('668,894 674,897 683,908 672,909','#00f'); poly('690,906 698,909 712,932 706,931 700,931 696,920','#00f'); poly('712,933 722,937 736,956 742,964 728,961 722,945','#00f'); poly('764,964 776,971 768,972','#00f'); poly('856,970 869,979 861,980','#00f'); poly('360,994 392,998 368,1000','#00f');
poly('393,998 393,982 404,984 420,977','#f00'); poly('410,978 432,975 425,980','#f00');
const raw=[]; for(let x=60;x<=1850;x+=2) raw.push(x+','+Math.round(at(obvP,x)+(rnd()-.5)*(x>660&&x<760?9:3)));
curve(raw.join(' '),1,'#f00');
curve('49,969 63,971 78,980 99,997 122,994 168,992 210,996 253,995 274,991 311,992 349,992 370,995 396,998 412,992 429,982 446,976 492,974 535,974 551,976 581,977 602,972 631,970 650,970 662,955 671,937 687,908 694,902 708,916 721,926 736,942 750,955 765,963 788,968 818,971 856,971 873,975 915,979 957,981 982,976 1041,977 1066,972 1104,967 1138,968 1188,972 1280,975 1407,976 1428,979 1462,981 1513,979 1580,983 1639,987 1736,989 1807,990 1852,990',2,'#993300');
curve('49,972 63,974 88,979 126,987 156,994 253,995 311,993 349,991 387,995 421,992 459,985 492,977 522,975 585,976 652,973 671,957 692,942 713,934 729,930 755,929 776,944 797,957 822,968 856,970 894,974 957,979 1041,977 1091,973 1125,971 1142,968 1201,970 1280,973 1302,974 1407,975 1449,977 1513,978 1576,979 1639,983 1681,986 1765,988 1852,991',3,'#00ffff');
curve(obv,1,'#0000e0');

// crosshair, frame and axes
vline(1738.5,139,1009,1,'#f00');
vline(48.5,139,1028,1,'#888'); vline(1866.5,139,1028,1,'#888');
vline(1863.5,139,696,3,'#e71f0c'); vline(1863.5,696,860,3,'#1058c8');
hline(6,1914,861.5,1,'#888'); hline(6,1914,1009.5,1,'#888'); hline(6,1914,1027.5,1,'#888');
vline(6.5,139,1028,1,'#888'); vline(1913.5,139,1028,1,'#888'); hline(6,1914,139.5,1,'#888');
for (let i=0;i<56;i++){ const y=Math.round(172+i*11.92)+.5; if(y<855) hline(1867,i%5==1?1873:1869,y,1,'#888'); }
for (let y=869;y<1008;y+=8) hline((y-901)%40==0?43:46,48,y+.5,1,'#888');
for (let y=882;y<1008;y+=7) hline(1867,[903,938,973].includes(y)?1873:1869,y+.5,1,'#888');
[[196,'24,700'],[243,'24,473'],[290,'24,246'],[337,'24,019'],[384,'23,792'],[432,'23,565'],[480,'23,338'],[529,'23,111'],[578,'22,884'],[678,'22,430'],[728,'22,203'],[779,'21,976'],[832,'21,750'],[980,'25,000'],[940,'0.00'],[900,'25,000']].forEach(([y,t]) => text(y>860?43:47,y,t,'#444',end));
['85.00','80.00','75.00','70.00','65.00','60.00','55.00','50.00','45.00','40.00','35.00','30.00'].forEach((t,i) => text(1874,Math.round(183+i*59.6),t));
text(1874,904,'15,000'); text(1874,938,'10,000'); text(1874,972,'5,000');
times.forEach(([x,t]) => { vline(x+.5,1009,1027,1,'#888'); if(t) text(x+1,1018,t); });
text(50,1017,'04/22','#333','font-weight="bold"'); text(1875,1018,'15:30:0');
rect(1670.5,1009.5,136,17,'#ffde7b','stroke="#000"'); text(1673,1018,'2024/04/23(화) 14:50:25');
rect(1902,864,9,9,'#444'); out.push('<path d="M1904 866l5 5M1909 866l-5 5" stroke="#fff"/>');
text(1867,146,'LC:4.14','#e71f0c'); text(1867,159,'HC:-8.6','#1058c8');
rect(59.5,140.500,154,14,'#f0f0f0','stroke="#bbb"'); text(63,148,'중앙에너비스 매물대 수(13)','#444','style="font-size:13px"'); rect(52.5,144.500,4,5,'#ccc','stroke="#888"');
rect(12.5,158.500,13,13,'#fff','stroke="#000"'); out.push('<path d="M15 161.500h8M15 165.500h8M15 169.500h8M15.500 161v9M19.500 161v9M22.500 161v9" stroke="#777"/>');
const flag = (x,w) => { rect(x+.5,486.5,w,28,'#ffde7b','stroke="#000"'); text(x+1,494,'23,246'); text(x+1,506,'+4.01%','#f00'); };
flag(8,37); flag(1870,41);
rect(10,623,35,13,'#e71f0c'); text(12,630,'2,650','#fff'); text(15,641,'.34%','#e71f0c');
rect(1871,623,40,13,'#e71f0c'); text(1873,630,'22,650','#fff'); text(1876,641,'1.34%','#e71f0c');
text(521,185,'최고 24,800 (-8.67%, 11:04)','#e71f0c'); text(80,824,'최저 21,750 (4.14%, 09:01)','#0000c8');
text(1675,184,'(고가+저가+종가)/3 가중','#ff6600'); text(1746,184,'저가 지수 24:','#000'); text(1861,184,'5: 22,979','#ff6600',end); text(1861,184,'79','#000',end);
text(1861,196,'200: 22,766','#c0c0c0',end); text(1861,196,'10: 22,766','#00ccff',end);
text(1861,208,'120: 23,067','#000',end); text(1861,208,'100: 22,900','#000',end);
text(1861,220,'15: 22,741','#ffcc00',end); text(1861,220,'5: 22,741','#e71f0c',end);
text(1696,216,'피봇2차저항선 24,650 (10.29%)','#f00');
text(1861,232,'30: 22,766','#cce6ff',end); text(1861,232,'10: 22,766','#0000e0',end);
text(1861,453,'피봇1차저항선 23,500 (5.15%)','#f000c0',end); text(1861,705,'전일종가 22,350 (0.00%)','#993300',end); text(1861,799,'당일시가 21,950 (-1.79%)','#00ff00',end);
text(1861,949,'거래량: 11,898','#339999',end); text(1861,949,'Signal 60: -30,498','#993300',end);
text(1861,961,'단순 5: 338','#ffff00',end); text(1861,961,'Signal 100: -30,778','#ff9900',end);
text(1861,973,'Signal 150: -30,786','#33dddd',end); text(1850,973,'54: 3','#000',end);
text(1861,985,'13: 1,020','#00ff00',end); text(1861,985,'OBV: -40,986','#f00',end);
text(1861,997,'Signal 24: -30,133','#0000c8',end);
byId('chart').innerHTML = out.join('');
</script>
</body>
</html>
